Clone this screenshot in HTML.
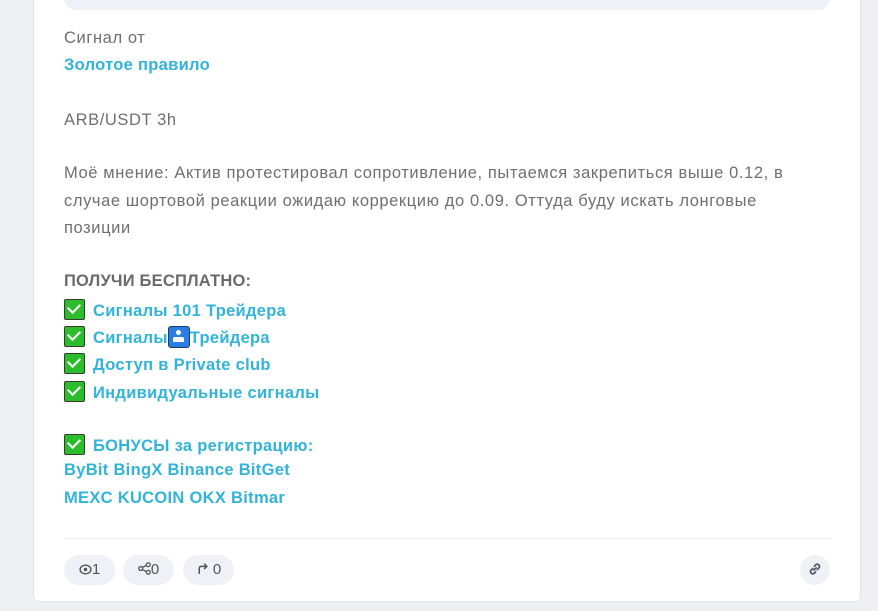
<!DOCTYPE html>
<html><head><meta charset="utf-8"><style>
body{margin:0;width:878px;height:611px;background:#eef0f4;font-family:"Liberation Sans",sans-serif;overflow:hidden;position:relative}
.card{position:absolute;left:33px;top:-10px;width:828px;height:612px;background:#fff;border:1px solid #e3e5ea;border-radius:6px;box-sizing:border-box}
.top{position:absolute;left:64px;top:-20px;width:766px;height:30px;background:#eef1f7;border-radius:12px}
.t{position:absolute;left:64px;font-size:16.5px;letter-spacing:0.6px;color:#6f6f6f;white-space:nowrap}
.l{color:#32b3d9;font-weight:bold;letter-spacing:0.3px}
.b{font-weight:bold;color:#6a6a6a;letter-spacing:0.2px}
.ck{display:inline-block;width:21px;height:21px;background:#2bbd2b;border:1.5px solid #3a3a2a;box-sizing:border-box;vertical-align:-4px;margin-right:8px;position:relative;border-radius:2px}
.ck:after{content:"";position:absolute;left:5px;top:1px;width:6px;height:10px;border:solid #fff;border-width:0 2px 2px 0;transform:rotate(45deg)}
.bs{display:inline-block;width:22px;height:22px;background:#2a7ee0;border:1.5px solid #1a3a6a;box-sizing:border-box;vertical-align:-5px;border-radius:3px;position:relative}
.bs:after{content:"";position:absolute;left:4px;top:10px;width:11px;height:5px;background:#fff;border-radius:2px 2px 0 0}
.bs:before{content:"";position:absolute;left:7px;top:3px;width:5px;height:5px;background:#fff;border-radius:50%}
.hr{position:absolute;left:64px;top:538px;width:766px;height:1px;background:#e8eaee}
.p{position:absolute;top:555px;height:30px;background:#eef1f6;border-radius:15px;font-size:15px;color:#555;line-height:30px;text-align:center}
</style></head><body>
<div class="card"></div>
<div class="top"></div>
<div class="t" style="top:29px">Сигнал от</div>
<div class="t l" style="top:56px">Золотое правило</div>
<div class="t" style="top:111px">ARB/USDT 3h</div>
<div class="t" style="top:164px">Моё мнение: Актив протестировал сопротивление, пытаемся закрепиться выше 0.12, в</div>
<div class="t" style="top:192px">случае шортовой реакции ожидаю коррекцию до 0.09. Оттуда буду искать лонговые</div>
<div class="t" style="top:219px">позиции</div>
<div class="t b" style="top:272px">ПОЛУЧИ БЕСПЛАТНО:</div>
<div class="t l" style="top:299px"><span class="ck"></span>Сигналы 101 Трейдера</div>
<div class="t l" style="top:326px"><span class="ck"></span>Сигналы<span class="bs"></span>Трейдера</div>
<div class="t l" style="top:353px"><span class="ck"></span>Доступ в Private club</div>
<div class="t l" style="top:381px"><span class="ck"></span>Индивидуальные сигналы</div>
<div class="t l" style="top:434px"><span class="ck"></span>БОНУСЫ за регистрацию:</div>
<div class="t l" style="top:461px">ByBit BingX Binance BitGet</div>
<div class="t l" style="top:489px">MEXC KUCOIN OKX Bitmar</div>
<div class="hr"></div>
<div class="p" style="left:64px;width:51px"><svg width="13" height="11" viewBox="0 0 12 10" style="vertical-align:-1px"><ellipse cx="6" cy="5" rx="5" ry="4" fill="none" stroke="#555" stroke-width="1.3"/><circle cx="6" cy="5" r="1.6" fill="#555"/></svg>1</div>
<div class="p" style="left:123px;width:51px"><svg width="13" height="13" viewBox="0 0 12 12" style="vertical-align:-1px"><circle cx="2.5" cy="6" r="1.8" fill="none" stroke="#555" stroke-width="1.2"/><circle cx="9.5" cy="2.5" r="1.8" fill="none" stroke="#555" stroke-width="1.2"/><circle cx="9.5" cy="9.5" r="1.8" fill="none" stroke="#555" stroke-width="1.2"/><path d="M4 5L8 3M4 7L8 9" stroke="#555" stroke-width="1.2"/></svg>0</div>
<div class="p" style="left:183px;width:51px"><svg width="13" height="13" viewBox="0 0 12 12" style="vertical-align:-1px"><path d="M3 11V6Q3 4 5 4H10M7.5 1.5L10 4L7.5 6.5" fill="none" stroke="#555" stroke-width="1.4"/></svg> 0</div>
<div class="p" style="left:800px;width:30px"><svg width="16" height="16" viewBox="0 0 14 14" style="vertical-align:-3px"><path d="M6 8L8 6M5 6.5L3.5 8a2 2 0 0 0 2.8 2.8L7.5 9.5M9 7.5L10.5 6a2 2 0 0 0-2.8-2.8L6.5 4.5" fill="none" stroke="#556" stroke-width="1.5" stroke-linecap="round"/></svg></div>
</body></html>
